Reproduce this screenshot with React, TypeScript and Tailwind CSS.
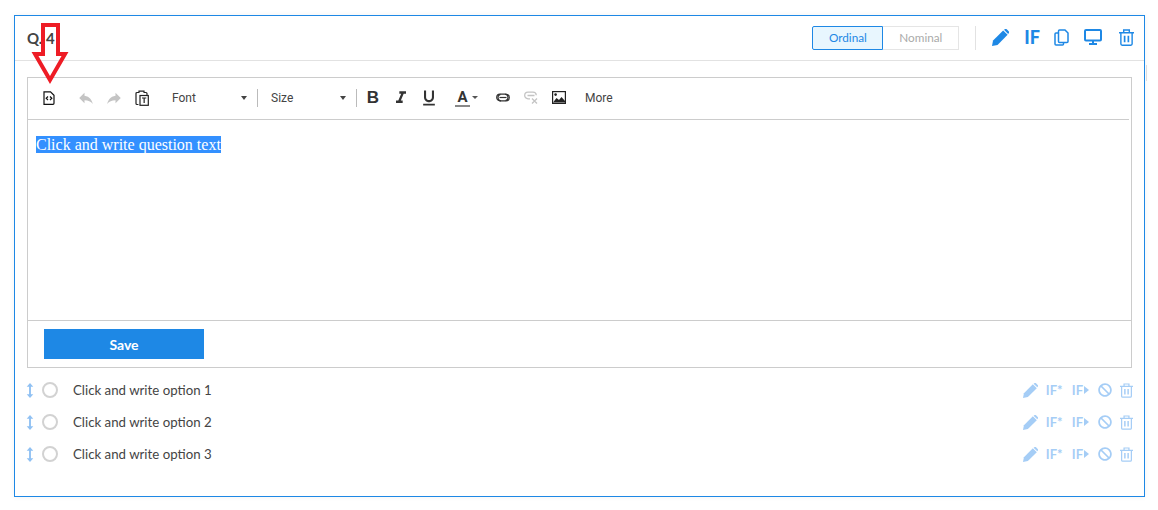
import { FaBan } from 'react-icons/fa'
import { MdFormatItalic, MdFormatUnderlined, MdReply } from 'react-icons/md'

const OPTIONS = ['Click and write option 1', 'Click and write option 2', 'Click and write option 3']

function PencilIcon({ className }: { className?: string }) {
  return (
    <svg viewBox="0 0 16 16" className={className} fill="currentColor">
      <path d="M1 10.800 10.500 1.300l4.200 4.200L5.200 15 0 16z" />
      <path d="M11.300.8 12 .3a1.400 1.400 0 0 1 1.900 0l1.800 1.800a1.400 1.400 0 0 1 0 1.900l-.5.6z" />
    </svg>
  )
}

function TrashIcon({ className }: { className?: string }) {
  return (
    <svg viewBox="0 0 16 18" className={className} fill="none" stroke="currentColor" strokeWidth="1.500">
      <path d="M0 4h16M5 4V1h6v3M2 4v12a1.300 1.300 0 0 0 1.300 1.200h9.400A1.300 1.300 0 0 0 14 16V4" />
      <path d="M6 7v7M10 7v7" strokeWidth="1.800" />
    </svg>
  )
}

function CopyIcon() {
  return (
    <svg viewBox="0 0 15 17" className="w-[15px] h-[17px]" fill="none" stroke="currentColor" strokeWidth="1.500">
      <path d="M5.500 1H11l3 3v8.500a1 1 0 0 1-1 1H5.500a1 1 0 0 1-1-1V2a1 1 0 0 1 1-1z" />
      <path d="M4.500 4H2a1 1 0 0 0-1 1v10a1 1 0 0 0 1 1h6.500a1 1 0 0 0 1-1v-1.500" />
    </svg>
  )
}

function MonitorIcon() {
  return (
    <svg viewBox="0 0 18 16" className="w-[18px] h-4" fill="none" stroke="currentColor" strokeWidth="2">
      <rect x="1" y="1" width="16" height="10.500" rx="1" />
      <path d="M9 12v3M5 15h8" />
    </svg>
  )
}

function FileCodeIcon() {
  return (
    <svg viewBox="0 0 12 14" className="w-3 h-[14px]" fill="none" stroke="#111" strokeWidth="1.200">
      <path d="M1 .8h6.500L11 4.300v8a1 1 0 0 1-1 1H1z" />
      <path d="M5 5.500 3.200 7.300 5 9M7 5.500l1.800 1.800L7 9" />
    </svg>
  )
}

function PasteIcon() {
  return (
    <svg viewBox="0 0 14 16" className="w-[14px] h-4" fill="none" stroke="#222" strokeWidth="1.200">
      <path d="M3.500 2.500H2a1 1 0 0 0-1 1v10a1 1 0 0 0 1 1h1M4 2.500V1.200h5v1.300M9 2.500h2a1 1 0 0 1 1 1v1" strokeLinecap="round" />
      <rect x="5" y="5.500" width="8.300" height="9.800" />
      <path d="M7 8h4.300M9.150 8v5" />
    </svg>
  )
}

function LinkIcon() {
  return (
    <svg viewBox="0 0 14 9" className="w-[14px] h-[9px]" fill="none" stroke="#333" strokeWidth="1.200">
      <path d="M5 7.800H4A3.300 3.300 0 0 1 4 1.200h5a3.300 3.300 0 0 1 .5 6.500" />
      <path d="M9 1.300h1a3.300 3.300 0 0 1 0 6.600H5a3.300 3.300 0 0 1-.5-6.500" />
      <path d="M3.500 4.500h7" />
    </svg>
  )
}

function UnlinkIcon() {
  return (
    <svg viewBox="0 0 14 13" className="w-[14px] h-[13px]" fill="none" stroke="#c4c4c4" strokeWidth="1.300">
      <path d="M6 7.800H4A3.300 3.300 0 0 1 4 1.200h5a3.300 3.300 0 0 1 3.300 3" />
      <path d="M3.500 4.500h7M8 7.500l5 5M13 7.500l-5 5" />
    </svg>
  )
}

function ImageIcon() {
  return (
    <svg viewBox="0 0 14 13" className="w-[14px] h-[13px]">
      <rect x=".6" y=".6" width="12.800" height="11.800" fill="none" stroke="#222" strokeWidth="1.200" />
      <circle cx="3.600" cy="3.600" r="1.300" fill="#222" />
      <path d="M1 11.500 4.500 7l2.500 2 2.500-3 3.500 4v1.500z" fill="#222" />
    </svg>
  )
}

function ToolSlot({ children }: { children: React.ReactNode }) {
  return <span className="w-7 flex items-center justify-center">{children}</span>
}

function OptionRow({ label }: { label: string }) {
  return (
    <div className="h-8 flex items-center">
      <svg viewBox="0 0 8 16" className="w-2 h-[15px] ml-[-1px] text-[#90c1f3]" fill="currentColor">
        <path d="M4 0l3.500 4H5v8h2.500L4 16 .5 12H3V4H.5z" />
      </svg>
      <span className="w-4 h-4 rounded-full border-2 border-[#d2d2d2] ml-[8px]" />
      <span className="ml-[15px] mt-[2px] text-[13.250px] text-[#444]">{label}</span>
      <div className="ml-auto flex items-center text-[#a5cdf6] font-bold text-[13px] mr-[-1px]">
        <PencilIcon className="w-[15px] h-[15px] mr-[1px]" />
        <span className="ml-[7px] w-4 mt-[1px]">IF*</span>
        <span className="ml-[10px] mt-[1px]">IF</span>
        <span className="w-0 h-0 border-y-[4px] border-y-transparent border-l-[5px] border-l-[#a5cdf6] ml-[1px]" />
        <FaBan className="w-[14px] h-[14px] ml-[9px]" />
        <TrashIcon className="w-[13px] h-[15px] ml-[8px]" />
      </div>
    </div>
  )
}

export default function App() {
  return (
    <div className="relative h-[510px] bg-white pt-[15px] pl-[14px] pr-[13px] font-['Lato',sans-serif]">
      <div className="border border-[#1e88e5] h-[482px] shadow-[0_0_6px_rgba(0,0,0,0.05)]">
        {/* Header */}
        <div className="h-[45px] flex items-center border-b border-[#e2e2e2] pl-3 pr-[10px]">
          <span className="text-[15px] font-bold text-[#444]">Q. 4</span>
          <div className="ml-auto flex text-[11.750px] h-6">
            <span className="w-[71px] flex items-center justify-center bg-[#e8f6fe] border border-[#1e88e5] rounded-l-[2px] text-[#1e88e5]">
              Ordinal
            </span>
            <span className="w-[76px] flex items-center justify-center border border-l-0 border-[#e5e5e5] text-[#aaa]">
              Nominal
            </span>
          </div>
          <span className="w-px h-6 bg-[#e2e2e2] ml-4" />
          <div className="flex items-center text-[#1e88e5] ml-[16px] mt-[-2px]">
            <PencilIcon className="w-[17px] h-[17px]" />
            <span className="ml-[15px] text-[18px] font-black">IF</span>
            <span className="ml-[14px]"><CopyIcon /></span>
            <span className="ml-[15px]"><MonitorIcon /></span>
            <TrashIcon className="w-[15px] h-[17px] ml-[17px]" />
          </div>
        </div>

        <div className="px-3">
          {/* Editor */}
          <div className="mt-4 border border-[#ccc] h-[291px] flex flex-col">
            <div className="h-[42px] pb-[2px] border-b border-[#ccc] mr-[2px] flex items-center text-[12px] text-[#444] pl-[7px] font-['Roboto',sans-serif]">
              <ToolSlot><FileCodeIcon /></ToolSlot>
              <span className="ml-[9px]"><ToolSlot><MdReply className="w-[18px] h-[18px] text-[#c4c4c4]" /></ToolSlot></span>
              <ToolSlot><MdReply className="w-[18px] h-[18px] text-[#c4c4c4] -scale-x-100" /></ToolSlot>
              <ToolSlot><PasteIcon /></ToolSlot>
              <span className="ml-4 w-[69px]">Font</span>
              <span className="w-0 h-0 border-x-[3.500px] border-x-transparent border-t-[4px] border-t-[#444]" />
              <span className="w-px h-[18px] bg-[#bbb] ml-[10px]" />
              <span className="ml-[13px] w-[69px]">Size</span>
              <span className="w-0 h-0 border-x-[3.500px] border-x-transparent border-t-[4px] border-t-[#444]" />
              <span className="w-px h-[18px] bg-[#bbb] ml-[10px]" />
              <span className="ml-[2px] w-7 text-center text-[17px] font-bold text-[#333] font-['Liberation_Sans',sans-serif]">B</span>
              <ToolSlot><MdFormatItalic className="w-5 h-5 text-[#333]" /></ToolSlot>
              <ToolSlot><MdFormatUnderlined className="w-5 h-5 text-[#333]" /></ToolSlot>
              <span className="ml-3 font-bold text-[15px] leading-[16px] text-[#333] border-b-2 border-[#888] w-[15px] text-center">A</span>
              <span className="w-0 h-0 border-x-[3px] border-x-transparent border-t-[3px] border-t-[#555] ml-[2px]" />
              <span className="ml-[11px]"><ToolSlot><LinkIcon /></ToolSlot></span>
              <ToolSlot><UnlinkIcon /></ToolSlot>
              <ToolSlot><ImageIcon /></ToolSlot>
              <span className="ml-[12px]">More</span>
            </div>
            <div className="flex-1 pl-2 pt-[15px] text-[16px] leading-[19px] text-white font-['Liberation_Serif',serif]">
              <span className="bg-[#3390ff]">Click and write question text</span>
            </div>
            <div className="h-[47px] border-t border-[#ccc] pl-4 pt-2">
              <button className="w-40 h-[30px] bg-[#1e88e5] text-white text-[14px] font-bold">Save</button>
            </div>
          </div>

          {/* Options */}
          <div className="mt-[6px]">
            {OPTIONS.map(option => (
              <OptionRow key={option} label={option} />
            ))}
          </div>
        </div>
      </div>

      {/* Annotation arrow drawn over the screenshot */}
      <svg viewBox="0 0 40 64" className="absolute left-[30px] top-[22px] w-10 h-16">
        <path d="M13 3H28V32H35L20 58 5 32H13z" fill="none" stroke="#ee1c25" strokeWidth="4" />
      </svg>
      <span className="absolute left-[1146px] top-[65px] w-px h-4 bg-[#ddd]" />
    </div>
  )
}
